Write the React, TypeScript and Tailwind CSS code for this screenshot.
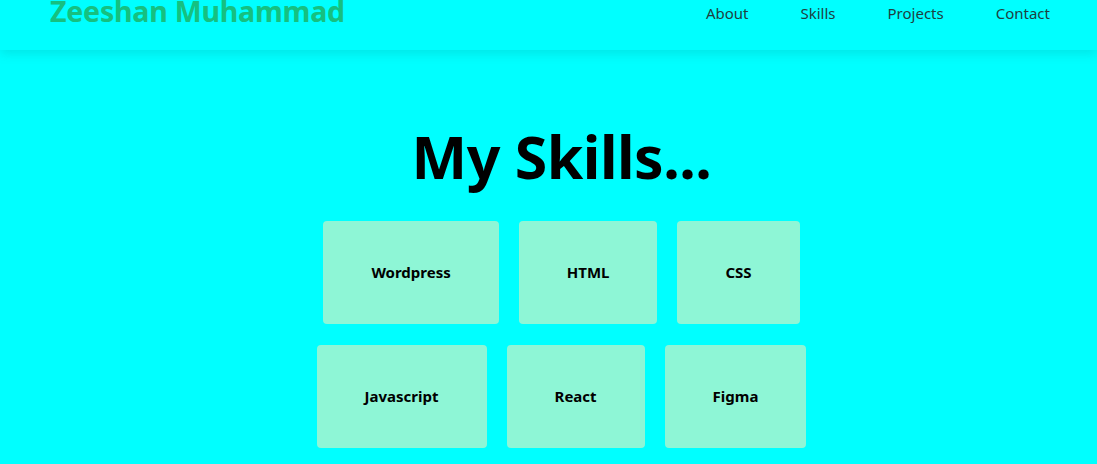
const NAV = ["About", "Skills", "Projects", "Contact"];
const SKILLS = [
  ["Wordpress", "HTML", "CSS"],
  ["Javascript", "React", "Figma"],
];

export default function App() {
  return (
    <div className="min-h-screen bg-[#00ffff] font-['Noto_Sans',sans-serif] overflow-hidden h-[464px]">
      {/* Header */}
      <header className="h-[50px] bg-[#00ffff] flex items-start justify-between pl-[50px] pr-[47px] shadow-[0_4px_10px_rgba(0,120,120,0.18)] relative z-10">
        <h1 className="text-[28.5px] leading-[27px] font-bold text-[#16c080] -mt-[2px] tracking-[-0.2px]">Zeeshan Muhammad</h1>
        <nav className="flex gap-[52px] pt-[3px]">
          {NAV.map((n) => (
            <a key={n} className="text-[15px] leading-[20px] text-[#1f3f3f]">{n}</a>
          ))}
        </nav>
      </header>

      {/* Skills */}
      <section className="flex flex-col items-center pl-[26px] pt-[66px]">
        <h2 className="text-[59px] leading-[80px] font-bold text-black tracking-[-0.5px]">My Skills...</h2>
        <div className="flex flex-col items-center gap-[21px] mt-[25px]">
          {SKILLS.map((row, i) => (
            <div key={i} className="flex gap-[20px]">
              {row.map((s) => (
                <div key={s} className="h-[103px] px-[48px] bg-[#8ef6d6] rounded-[4px] flex items-center justify-center">
                  <span className="text-[15px] font-bold text-black">{s}</span>
                </div>
              ))}
            </div>
          ))}
        </div>
      </section>
    </div>
  );
}
